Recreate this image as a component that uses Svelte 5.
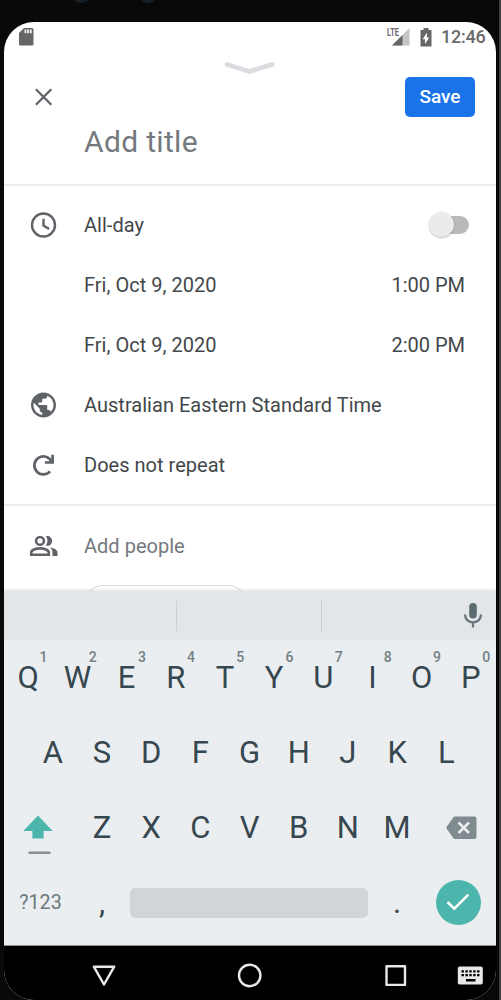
<script>
  const topKeys = 'QWERTYUIOP'.split('').map((k, i) => ({ k, n: (i + 1) % 10 }));
  const midKeys = 'ASDFGHJKL'.split('');
  const lowKeys = 'ZXCVBNM'.split('');
  const times = [
    { date: 'Fri, Oct 9, 2020', time: '1:00 PM' },
    { date: 'Fri, Oct 9, 2020', time: '2:00 PM' }
  ];
</script>

<div class="device">
  <div class="lens one"></div>
  <div class="lens two"></div>
  <div class="screen">
    <div class="status">
      <svg class="sd" width="16" height="20" viewBox="0 0 16 20">
        <path d="M6 1H14Q15.5 1 15.5 2.500V17Q15.500 18.500 14 18.500H2.500Q1 18.500 1 17V6Z" fill="#666" />
        <path d="M6.500 2.500h1.900v3.700h-1.900zM9.200 2.500h1.900v3.700h-1.900zM11.900 2.500h1.900v3.700h-1.900z" fill="#eee" />
      </svg>
      <div class="signal">
        <span class="lte">LTE</span>
        <svg width="18" height="18" viewBox="0 0 18 18">
          <path d="M17.500 0V17.500H0Z" fill="#c4c4c4" />
          <path d="M10.500 7V17.500H0Z" fill="#666" />
        </svg>
      </div>
      <svg class="battery" width="12" height="19" viewBox="0 0 12 19">
        <path d="M3.500 0H8.500V2H11.500V18.500H.500V2H3.500Z" fill="#666" />
        <path d="M6.900 4.500V9.500H9.300L5 16V11.300H2.700Z" fill="#fff" />
      </svg>
      <span class="clock">12:46</span>
    </div>

    <div class="handle">
      <svg width="52" height="14" viewBox="0 0 52 14">
        <path d="M3 3.500L25.500 10.500L48 3.500" fill="none" stroke="#dadce0" stroke-width="4.800" stroke-linecap="round" />
      </svg>
    </div>

    <div class="head">
      <svg width="18" height="18" viewBox="0 0 18 18">
        <path d="M.900 1.300L16.300 16.700M16.300 1.300L.900 16.700" stroke="#5f6368" stroke-width="2.300" />
      </svg>
      <button class="save">Save</button>
    </div>
    <div class="title">Add title</div>

    <div class="section schedule">
      <div class="row">
        <div class="icon">
          <svg width="30" height="30" viewBox="0 0 24 24">
            <circle cx="12" cy="12" r="9.200" fill="none" stroke="#5f6368" stroke-width="1.900" />
            <path d="M12 7V12.500L16.500 15.200" fill="none" stroke="#5f6368" stroke-width="1.900" />
          </svg>
        </div>
        <span class="label">All-day</span>
        <div class="switch"><div class="thumb"></div></div>
      </div>
      {#each times as t}
        <div class="row">
          <div class="icon"></div>
          <span class="label">{t.date}</span>
          <span class="time">{t.time}</span>
        </div>
      {/each}
      <div class="row">
        <div class="icon">
          <svg width="30" height="30" viewBox="0 0 24 24" fill="#5f6368">
            <path d="M12 2C6.480 2 2 6.480 2 12s4.480 10 10 10 10-4.480 10-10S17.520 2 12 2zm-1 17.930c-3.950-.490-7-3.850-7-7.930 0-.620.080-1.210.210-1.790L9 15v1c0 1.100.900 2 2 2v1.930zm6.900-2.540c-.260-.810-1-1.390-1.900-1.390h-1v-3c0-.550-.450-1-1-1H8v-2h2c.550 0 1-.450 1-1V7h2c1.100 0 2-.900 2-2v-.410c2.930 1.190 5 4.060 5 7.410 0 2.080-.800 3.970-2.100 5.390z" />
          </svg>
        </div>
        <span class="label">Australian Eastern Standard Time</span>
      </div>
      <div class="row">
        <div class="icon">
          <svg width="30" height="30" viewBox="0 0 30 30" fill="none" stroke="#5f6368" stroke-width="2.700">
            <path d="M21.600 21.400A9 9 0 1 1 23 11.600" />
            <path d="M24.100 4.800V12.500H16.400" />
          </svg>
        </div>
        <span class="label">Does not repeat</span>
      </div>
    </div>

    <div class="section people">
      <div class="row">
        <div class="icon">
          <svg width="30" height="30" viewBox="0 0 30 30">
            <g fill="none" stroke="#5f6368" stroke-width="2.600">
              <circle cx="11.500" cy="9.900" r="3.900" />
              <path d="M2.700 23.800V21.500C2.700 18.800 7.500 17.400 11.500 17.400S20.300 18.800 20.300 21.500V23.800Z" />
            </g>
            <path d="M17.200 5.100C20.800 4.300 23.600 6.500 23.600 9.900S20.800 15.500 17.200 14.700C19.500 12 19.500 7.800 17.200 5.100Z" fill="#5f6368" />
            <path d="M21.500 16.600C25.500 17.200 29 18.700 29 21.800V25H24V21.800C24 19.500 23 17.900 21.500 16.600Z" fill="#5f6368" />
          </svg>
        </div>
        <span class="label muted">Add people</span>
      </div>
      <div class="chip-clip"><div class="chip"></div></div>
    </div>

    <div class="suggest">
      <div class="slot"></div>
      <div class="slot mid"></div>
      <div class="slot mic">
        <svg width="18" height="25" viewBox="0 0 18 25">
          <rect x="5.200" y="0" width="7.600" height="15.500" rx="3.800" fill="#5c6b70" />
          <path d="M1 11.500C1 22 17 22 17 11.500M9 19V24.500" fill="none" stroke="#66757a" stroke-width="2.200" />
        </svg>
      </div>
    </div>

    <div class="keyboard">
      <div class="keys">
        {#each topKeys as { k, n }}
          <div class="key">{k}<span class="hint">{n}</span></div>
        {/each}
      </div>
      <div class="keys inset">
        {#each midKeys as k}<div class="key">{k}</div>{/each}
      </div>
      <div class="keys">
        <div class="key wide shift">
          <svg width="30" height="40" viewBox="0 0 30 40">
            <path d="M15 .500L29.700 16H20.600V23.500H9.400V16H.300Z" fill="#4db6ac" />
            <rect x="5.500" y="36.500" width="22" height="2.500" rx=".600" fill="#849095" />
          </svg>
        </div>
        {#each lowKeys as k}<div class="key">{k}</div>{/each}
        <div class="key wide delete">
          <svg width="31" height="24" viewBox="0 0 31 24">
            <path d="M8 .500H28.500Q30.500 .500 30.500 2.500V21Q30.500 23 28.500 23H8L.500 12.500V11Z" fill="#808b8f" />
            <path d="M12.500 6.500L23 17M23 6.500L12.500 17" stroke="#ebeef1" stroke-width="2.500" />
          </svg>
        </div>
      </div>
      <div class="keys">
        <div class="key wide symbols">?123</div>
        <div class="key punct">,</div>
        <div class="space"><div class="bar"></div></div>
        <div class="key punct">.</div>
        <div class="key wide enter">
          <div class="go">
            <svg width="24" height="18" viewBox="0 0 24 18">
              <path d="M1.500 9L8.300 15.700L22.300 1.700" fill="none" stroke="#fff" stroke-width="2.500" />
            </svg>
          </div>
        </div>
      </div>
    </div>

    <div class="nav">
      <svg width="492" height="54" viewBox="0 0 492 54" fill="none" stroke="#e8e8e8" stroke-width="2.400" stroke-linejoin="round">
        <path d="M89.800 20.700H110.200L100 38.500Z" />
        <circle cx="245.700" cy="29.500" r="10.700" />
        <rect x="382.500" y="20.200" width="18.500" height="18.700" />
        <rect x="453.800" y="20.500" width="25" height="18" rx="2" fill="#e8e8e8" stroke="none" />
        <path d="M457.500 25.300H475.500M457.500 29.200H475.500" stroke="#000" stroke-width="2.300" stroke-dasharray="2.400 1.500" />
        <path d="M462 34.300H471.500" stroke="#000" stroke-width="2.400" />
      </svg>
    </div>
  </div>
</div>

<style>
  :global(body) {
    margin: 0;
    background: #090909;
  }
  .device {
    position: relative;
    box-sizing: border-box;
    width: 501px;
    height: 1000px;
    padding: 22px 3px 0 4px;
    border-right: 2px solid #414144;
    background: #090909;
    overflow: hidden;
    font-family: Roboto, sans-serif;
    color: #43474a;
  }
  .lens {
    position: absolute;
    top: -17px;
    width: 20px;
    height: 20px;
    border-radius: 50%;
    background: #182027;
  }
  .one { left: 71px; }
  .two { left: 138px; }
  .screen {
    display: flex;
    flex-direction: column;
    width: 492px;
    height: 978px;
    border-radius: 30px;
    overflow: hidden;
    background: #fff;
  }
  .status {
    display: flex;
    align-items: center;
    height: 30px;
    flex: none;
    padding: 0 10.500px 0 14px;
    color: #6a6a6a;
  }
  .signal {
    display: flex;
    align-items: flex-end;
    margin-left: auto;
  }
  .lte {
    width: 5px;
    height: 18px;
    font-size: 10.500px;
    line-height: 10px;
    font-weight: 700;
    transform: scaleX(.7);
    transform-origin: left;
  }
  .battery { margin-left: 10px; }
  .clock {
    margin-left: 9px;
    font-size: 18px;
    line-height: 30px;
    font-weight: 500;
    letter-spacing: -.220px;
  }
  .handle {
    display: flex;
    justify-content: center;
    align-items: flex-end;
    box-sizing: border-box;
    height: 23px;
    flex: none;
    padding: 0 1px .500px 0;
  }
  .head {
    display: flex;
    align-items: center;
    justify-content: space-between;
    height: 44px;
    flex: none;
    padding: 0 21px 0 30.500px;
  }
  .save {
    width: 70px;
    height: 40px;
    padding: 0;
    border: 0;
    border-radius: 5px;
    background: #1a73e8;
    color: #fff;
    font: 500 19px/40px Roboto, sans-serif;
  }
  .title {
    flex: none;
    height: 65px;
    padding-left: 80px;
    font-size: 30px;
    line-height: 46px;
    letter-spacing: .320px;
    color: #74797e;
  }
  .section {
    flex: none;
    box-sizing: border-box;
    border-top: 2px solid #ececed;
  }
  .schedule {
    height: 320px;
    padding-top: 9px;
    margin-top: -.500px;
    margin-bottom: .500px;
  }
  .schedule .row:first-child { height: 60px; margin-bottom: .600px; }
  .people {
    height: 87px;
    padding-top: 9.500px;
    overflow: hidden;
  }
  .row {
    display: flex;
    align-items: center;
    height: 60px;
    padding-right: 31px;
  }
  .icon {
    display: flex;
    width: 56px;
    padding-left: 24px;
  }
  .icon svg { transform: translateX(.500px); }
  .label, .time {
    font-size: 20px;
    line-height: 26px;
    white-space: nowrap;
  }
  .label { letter-spacing: .020px; }
  .muted { color: #74797e; }
  .time { margin-left: auto; }
  .switch {
    width: 36px;
    height: 18px;
    margin: 0 -4px 0 auto;
    border-radius: 9px;
    background: #bababa;
  }
  .thumb {
    width: 25px;
    height: 25px;
    margin: -3.500px 0 0 -4px;
    border-radius: 50%;
    background: #ebebeb;
    box-shadow: 0 1px 2px #0004;
  }
  .chip-clip {
    margin-left: 80px;
    padding-top: 9.500px;
  }
  .chip {
    width: 163px;
    height: 38px;
    box-sizing: border-box;
    border: 1px solid #d5d7da;
    border-radius: 19px;
  }
  .suggest {
    position: relative;
    display: flex;
    align-items: center;
    flex: none;
    height: 49px;
    background: #e2e6e9;
    box-shadow: 0 -1px 3px #0002;
  }
  .slot {
    box-sizing: border-box;
    width: 173px;
    height: 30px;
    border-right: 1px solid #c9ced1;
  }
  .mid { width: 145px; }
  .mic {
    flex: 1;
    display: flex;
    justify-content: flex-end;
    align-items: center;
    padding-right: 14px;
    border: 0;
  }
  .keyboard {
    flex: none;
    box-sizing: border-box;
    height: 306px;
    background: #ebeef1;
    border-top: 2px solid #f0f0f1;
    border-bottom: 1px solid #8f9395;
  }
  .keys {
    display: flex;
    height: 75px;
  }
  .keys:first-child { height: 74px; }
  .inset { padding: 0 24.600px; }
  .key {
    position: relative;
    display: flex;
    box-sizing: border-box;
    align-items: center;
    justify-content: center;
    width: 49.200px;
    padding: 0 .800px 1px 0;
    font-size: 31px;
    line-height: 24px;
    color: #37474f;
  }
  .keys:first-child .key { padding-bottom: 2px; }
  .hint {
    position: absolute;
    top: 8px;
    left: 30px;
    width: 19px;
    text-align: center;
    font-size: 14px;
    line-height: 14px;
    font-weight: 500;
    color: #738085;
  }
  .wide { width: 73.800px; }
  .shift { padding: 0 6px 0 0; }
  .shift svg { margin-top: 13px; }
  .delete { padding: 0 0 2px 4px; }
  .symbols { font-size: 19.700px; color: #6c797e; }
  .space {
    display: flex;
    align-items: center;
    width: 246px;
  }
  .bar {
    width: 238px;
    height: 30px;
    margin: -2px auto 0 3.500px;
    border-radius: 5px;
    background: #d0d5d8;
  }
  .enter { padding: 0 2px 3px 0; }
  .go {
    display: flex;
    align-items: center;
    justify-content: center;
    width: 45px;
    height: 45px;
    border-radius: 50%;
    background: #4db6ac;
  }
  .nav {
    flex: none;
    height: 54px;
    background: #000;
  }
</style>
